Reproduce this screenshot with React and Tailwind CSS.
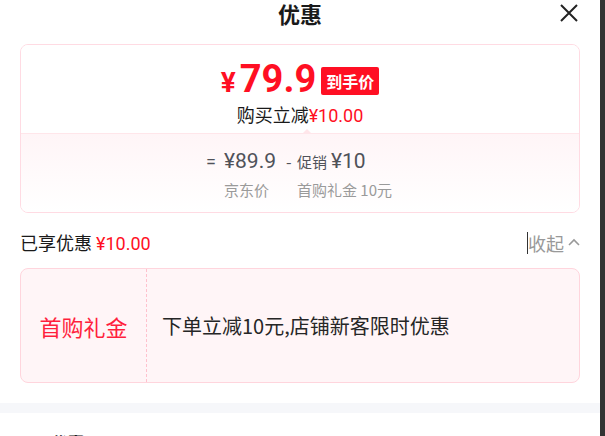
import React from "react";

const cjk = { fontFamily: '"Noto Sans CJK SC", "Noto Sans", sans-serif' };
const num = { fontFamily: 'Roboto, "Noto Sans CJK SC", sans-serif' };

const CloseIcon = () => (
  <svg width="18" height="18" viewBox="0 0 18 18" fill="none">
    <path d="M1 1L17 17M17 1L1 17" stroke="#222" strokeWidth="2" />
  </svg>
);

const ChevronUp = () => (
  <svg width="12" height="8" viewBox="0 0 12 8" fill="none">
    <path d="M1 7L6 2L11 7" stroke="#999" strokeWidth="1.6" />
  </svg>
);

export default function App() {
  return (
    <div className="flex w-[605px] h-[436px] overflow-hidden bg-white" style={cjk}>
      <div className="w-[600px] h-full bg-white flex flex-col">
        {/* header */}
        <div className="relative shrink-0 h-[44px] flex justify-center">
          <h2 className="text-[22px] leading-[27px] font-bold text-[#1a1a1a]">优惠</h2>
          <button className="absolute right-[22px] top-[4px]">
            <CloseIcon />
          </button>
        </div>

        <div className="px-5 shrink-0">
          {/* price card */}
          <div className="rounded-[8px] border border-[#ffdbe3] overflow-hidden">
            <div className="relative h-[88px] flex flex-col items-center bg-white">
              <div className="flex items-baseline mt-[15px] h-[38px]">
                <span className="text-[#ff0f23] text-[28px] font-bold leading-none" style={num}>¥</span>
                <span className="text-[#ff0f23] text-[38px] font-bold leading-none ml-[4px]" style={num}>79.9</span>
                <span className="self-center ml-[5px] mt-[4px] bg-[#ff0f23] text-white text-[16px] font-bold leading-[28px] px-[5px] rounded-[2px]">到手价</span>
              </div>
              <div className="mt-[4px] text-[18px] leading-[24px] text-[#1a1a1a]">
                购买立减<span className="text-[#ff0f23]" style={num}>¥10.00</span>
              </div>
              <div className="absolute bottom-[-1px] left-[281px] w-0 h-0 border-l-[5px] border-r-[5px] border-b-[5px] border-l-transparent border-r-transparent border-b-[#ffe6ea]" />
            </div>
            <div className="h-[79px] border-t border-[#ffe6ea] bg-gradient-to-b from-[#fff5f7] to-white flex flex-col items-center pt-[15px]">
              <div className="w-[188px] flex items-baseline text-[#505259] leading-[24px]">
                <span className="w-[18px] text-[18px]" style={num}>=</span>
                <span className="w-[62px] text-[21px]" style={num}>¥89.9</span>
                <span className="w-[11px] text-[16px]">-</span>
                <span className="text-[15px] mr-[4px]">促销</span>
                <span className="text-[21px]" style={num}>¥10</span>
              </div>
              <div className="w-[188px] flex text-[15px] leading-[20px] text-[#9a9a9a] mt-[6px] pl-[18px]">
                <span className="w-[73px]">京东价</span>
                <span>首购礼金 10元</span>
              </div>
            </div>
          </div>

          {/* enjoyed */}
          <div className="flex items-center justify-between h-[55px] pt-[5px]">
            <div className="text-[18px] leading-[24px] text-[#1a1a1a]">
              已享优惠 <span className="text-[#ff0f23]" style={num}>¥10.00</span>
            </div>
            <div className="flex items-center text-[18px] leading-[24px] text-[#999]">
              <span className="w-px h-[22px] bg-[#333]" />
              <span>收起</span>
              <span className="ml-[4px] mb-[3px]"><ChevronUp /></span>
            </div>
          </div>

          {/* coupon */}
          <div className="flex h-[115px] rounded-[8px] border border-[#ffd5dd] bg-[#fff5f7]">
            <div className="w-[126px] flex items-center justify-center border-r border-dashed border-[#ffc2ce]">
              <span className="text-[22px] leading-[30px] text-[#ff1f3d]">首购礼金</span>
            </div>
            <div className="flex items-center pl-[15px] text-[20px] leading-[28px] text-[#262626]">
              下单立减10元,店铺新客限时优惠
            </div>
          </div>
        </div>

        <div className="shrink-0 mt-[20px] h-[10px] bg-[#f6f7fa]" />
        <div className="shrink-0 px-5 pt-[18px] text-[16px] leading-[22px] text-[#1a1a1a] font-bold">可用优惠</div>
      </div>
      <div className="w-[5px] h-full bg-[#333]" />
    </div>
  );
}
